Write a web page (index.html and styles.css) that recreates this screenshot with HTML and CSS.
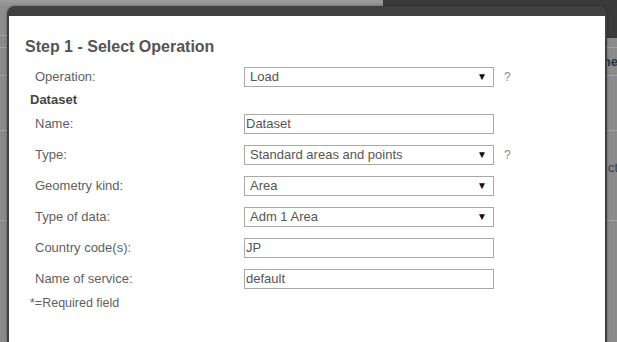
FILE: index.html
```html
<!DOCTYPE html>
<html>
	<head>
		<title>Step 1 - Select Operation</title>
		<link rel="stylesheet" href="styles.css">
	</head>
	<body>
		<!-- dimmed app behind the dialog -->
		<div class="page">
			<div class="topbar">
				<div class="topbarLeft"></div>
				<div class="topbarRight"></div>
			</div>
			<div class="sheetRow head"><span>ne</span></div>
			<div class="sheetRow tall"></div>
			<div class="sheetRow big"><span>ct</span></div>
			<div class="sheetRow"></div>
		</div>

		<div class="modal">
			<div class="modalBody">
				<h2>Step 1 - Select Operation</h2>

				<div class="row">
					<label>Operation:</label>
					<span class="selectBox">Load</span>
					<span class="help">?</span>
				</div>

				<div class="section">Dataset</div>

				<div class="row">
					<label>Name:</label>
					<span class="textBox">Dataset</span>
				</div>
				<div class="row">
					<label>Type:</label>
					<span class="selectBox">Standard areas and points</span>
					<span class="help">?</span>
				</div>
				<div class="row">
					<label>Geometry kind:</label>
					<span class="selectBox">Area</span>
				</div>
				<div class="row">
					<label>Type of data:</label>
					<span class="selectBox">Adm 1 Area</span>
				</div>
				<div class="row">
					<label>Country code(s):</label>
					<span class="textBox">JP</span>
				</div>
				<div class="row">
					<label>Name of service:</label>
					<span class="textBox">default</span>
				</div>

				<div class="note">*=Required field</div>
			</div>
		</div>
	</body>
</html>
```

FILE: styles.css
```css
body
{
	margin:0;
	width:617px;
	height:342px;
	overflow:hidden;
	position:relative;
	background:#8b8b8b;
	font-family:"Liberation Sans", Arial, sans-serif;
}

/* background page */
.topbar
{
	display:flex;
	height:38px;
}
.topbarLeft
{
	width:383px;
	background:linear-gradient(#9c9c9c, #8d8d8d 8px, #8d8d8d);
	border-bottom:1px solid #a3a3a3;
	height:35px;
}
.topbarRight
{
	flex:1;
	background:#3a3a3a;
}
.sheetRow
{
	height:27px;
	border-top:1px solid #a2a2a2;
	text-align:right;
	font:bold 13px "Liberation Sans", sans-serif;
	color:#2b3440;
	line-height:27px;
}
.sheetRow.head
{
	margin-top:9px;
}
.sheetRow.tall
{
	height:54px;
}
.sheetRow.big
{
	height:89px;
	line-height:74px;
	font-weight:normal;
	color:#3a3f46;
}
.sheetRow span
{
	margin-right:-1px;
}

/* dialog */
.modal
{
	position:absolute;
	left:7px;
	top:6px;
	width:596px;
	height:326px;
	background:#fff;
	border:2px solid #404040;
	border-top:10px solid #404040;
	border-bottom:0;
	border-radius:8px 8px 0 0;
	box-shadow:0 0 3px rgba(0,0,0,0.35);
}
.modalBody
{
	padding:20px 0 0 16px;
	color:#5f5f5f;
	font-size:13px;
}
h2
{
	margin:0 0 9px 0;
	font-size:16px;
	line-height:22px;
	color:#555;
}
.row
{
	display:grid;
	grid-template-columns:209px 250px auto;
	align-items:center;
	padding-left:10px;
	margin-bottom:11px;
}
.row label
{
	line-height:20px;
}
.selectBox, .textBox
{
	position:relative;
	box-sizing:border-box;
	height:20px;
	line-height:18px;
	border:1px solid #a9a9a9;
	color:#555;
	white-space:nowrap;
}
.selectBox
{
	padding-left:5px;
}
.selectBox::after
{
	content:"\25BC";
	position:absolute;
	right:6px;
	top:0;
	font-size:10px;
	color:#111;
}
.textBox
{
	padding-left:1px;
}
.help
{
	margin-left:10px;
	color:#8a8a8a;
	font-size:12px;
}
.section
{
	margin:-8px 0 4px 5px;
	line-height:20px;
	font-weight:bold;
	color:#444;
}
.note
{
	margin:-5px 0 0 5px;
	line-height:16px;
	font-size:12.5px;
}
```
